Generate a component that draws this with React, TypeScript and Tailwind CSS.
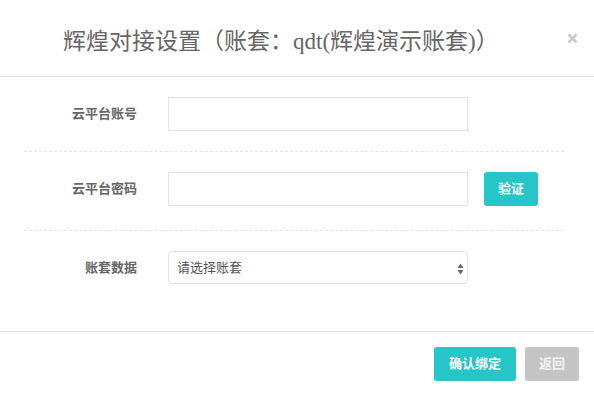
const labelCls =
    "w-[115px] shrink-0 text-right text-[13px] font-bold text-[#666] pr-[2px]";

const Row = ({
    label,
    children,
    className,
}: {
    label: string;
    children: React.ReactNode;
    className: string;
}) => (
    <div className={`flex items-center border-b border-dashed border-[#e3e3e3] ${className}`}>
        <div className={labelCls}>{label}</div>
        <div className="ml-[29px] flex items-center">{children}</div>
    </div>
);

const App = () => {
    return (
        <div
            className="w-[594px] h-[396px] bg-white overflow-hidden"
            style={{ fontFamily: '"Liberation Sans", "Noto Sans CJK SC", sans-serif' }}
        >
            {/* header */}
            <div className="relative h-[77px] border-b border-[#e5e5e5] flex items-center pl-[63px] pt-[7px]">
                <h1
                    className="text-[23px] text-[#666] leading-none"
                    style={{ fontFamily: '"Liberation Serif", "Noto Sans CJK SC", serif' }}
                >
                    辉煌对接设置（账套：qdt(辉煌演示账套)）
                </h1>
                <svg
                    className="absolute left-[567px] top-[33px]"
                    width="11"
                    height="11"
                    viewBox="0 0 11 11"
                >
                    <path d="M1.5 1.5 L9.5 9.5 M9.5 1.5 L1.5 9.5" stroke="#c8c8c8" strokeWidth="2.6" />
                </svg>
            </div>

            {/* body */}
            <div className="h-[254px] ml-[24px] w-[540px]">
                <Row label="云平台账号" className="pt-[20px] pb-[20px]">
                    <input className="w-[300px] h-[34px] border border-[#e3e3e3] outline-none px-2 text-[13px]" />
                </Row>
                <Row label="云平台密码" className="pt-[20px] pb-[24px]">
                    <input
                        type="password"
                        className="w-[300px] h-[34px] border border-[#e3e3e3] outline-none px-2 text-[13px]"
                    />
                    <button className="ml-[16px] w-[54px] h-[34px] rounded-[3px] bg-[#25c5c8] text-white text-[13px] font-bold">
                        验证
                    </button>
                </Row>
                <div className="flex items-center pt-[20px]">
                    <div className={labelCls}>账套数据</div>
                    <div className="ml-[29px] relative w-[300px] h-[33px] border border-[#e3e3e3] rounded-[4px] flex items-center pl-[8px] text-[13px] text-[#555]">
                        请选择账套
                        <svg
                            className="absolute right-[3px] top-[11px]"
                            width="7"
                            height="12"
                            viewBox="0 0 7 12"
                        >
                            <path d="M3.5 0.5 L6.5 5 L0.5 5 Z" fill="#666" />
                            <path d="M0.5 7 L6.5 7 L3.5 11.5 Z" fill="#666" />
                        </svg>
                    </div>
                </div>
            </div>

            {/* footer */}
            <div className="border-t border-[#e5e5e5] flex justify-end gap-[9px] pt-[15px] pr-[15px]">
                <button className="w-[82px] h-[34px] rounded-[3px] bg-[#25c5c8] text-white text-[13px] font-bold">
                    确认绑定
                </button>
                <button className="w-[54px] h-[34px] rounded-[3px] bg-[#c4c4c4] text-[#f2f2f2] text-[13px] font-bold">
                    返回
                </button>
            </div>
        </div>
    );
};

export default App;
